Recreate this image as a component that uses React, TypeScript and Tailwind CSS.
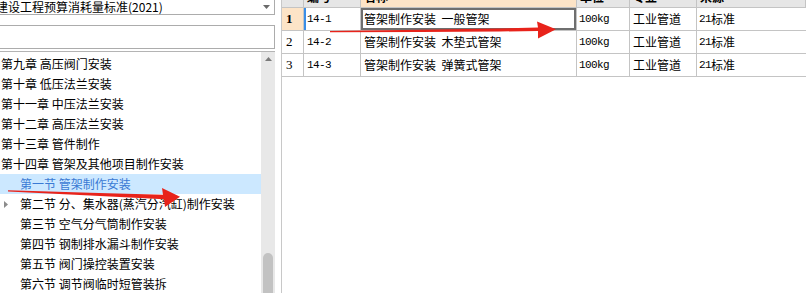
import React from 'react';

type TreeItem = { text: string; level: 0 | 1; selected?: boolean; expandable?: boolean };

const tree: TreeItem[] = [
  { text: '第九章 高压阀门安装', level: 0 },
  { text: '第十章 低压法兰安装', level: 0 },
  { text: '第十一章 中压法兰安装', level: 0 },
  { text: '第十二章 高压法兰安装', level: 0 },
  { text: '第十三章 管件制作', level: 0 },
  { text: '第十四章 管架及其他项目制作安装', level: 0 },
  { text: '第一节 管架制作安装', level: 1, selected: true },
  { text: '第二节 分、集水器(蒸汽分汽缸)制作安装', level: 1, expandable: true },
  { text: '第三节 空气分气筒制作安装', level: 1 },
  { text: '第四节 钢制排水漏斗制作安装', level: 1 },
  { text: '第五节 阀门操控装置安装', level: 1 },
  { text: '第六节 调节阀临时短管装拆', level: 1 },
];

const headers = ['', '编号', '名称', '单位', '专业', '来源'];

const rows = [
  { n: '1', code: '14-1', name: '管架制作安装  一般管架' },
  { n: '2', code: '14-2', name: '管架制作安装  木垫式管架' },
  { n: '3', code: '14-3', name: '管架制作安装  弹簧式管架' },
];

export default function App() {
  return (
    <div className="relative flex h-[293px] w-[806px] overflow-hidden bg-white font-['Noto_Sans_CJK_SC',sans-serif] text-[12px] text-black">
      {/* Left: quota library + chapter tree */}
      <div className="flex w-[282px] shrink-0 flex-col overflow-hidden border-r border-[#c8c8c8]">
        <div className="-mt-[2px] mr-[6px] -ml-[3px] flex h-[17px] shrink-0 items-center border border-[#acacac]">
          <span className="-ml-[2px] whitespace-nowrap leading-none">建设工程预算消耗量标准(2021)</span>
          <svg className="mr-[4px] ml-auto" width="7" height="4" viewBox="0 0 7 4">
            <path d="M0 0h7L3.5 4z" fill="#6a6a6a" />
          </svg>
        </div>
        <div className="mt-[10px] mr-[6px] -ml-[3px] h-[24px] shrink-0 border border-[#acacac]" />
        <div className="mt-[2px] mr-[6px] flex min-h-0 flex-1 border-t border-[#b4b4b4]">
          <div className="flex-1 overflow-hidden pt-[2px]">
            {tree.map((item) => (
              <div
                key={item.text}
                className={`flex h-[20px] items-center whitespace-nowrap ${item.selected ? 'bg-[#cce8ff] text-[#3a7ad4]' : ''}`}
              >
                {item.level === 1 && (
                  <span className="flex w-[20px] shrink-0 items-center pl-[4px]">
                    {item.expandable && (
                      <svg width="4" height="7" viewBox="0 0 4 7">
                        <path d="M0 0l4 3.5L0 7z" fill="#8c8c8c" />
                      </svg>
                    )}
                  </span>
                )}
                <span className={item.level === 0 ? 'pl-[1px]' : ''}>{item.text}</span>
              </div>
            ))}
          </div>
          <div className="flex w-[14px] shrink-0 flex-col items-center bg-[#e8e8e8]">
            <svg className="mt-[5px]" width="7" height="4" viewBox="0 0 7 4">
              <path d="M3.5 0L7 4H0z" fill="#7a7a7a" />
            </svg>
            <div className="mt-auto h-[40px] w-[10px] rounded-t-[5px] bg-[#c2c2c2]" />
          </div>
        </div>
      </div>

      {/* Right: quota table */}
      <div className="min-w-0 flex-1 overflow-hidden">
        <div className="-mt-[16px] grid h-[24px] grid-cols-[22px_57px_216px_53px_67px_1fr]">
          {headers.map((h, i) => (
            <div
              key={i}
              className={`flex items-end overflow-hidden border-r border-b border-[#c4c4c4] pb-[4px] pl-[3px] leading-none font-bold whitespace-nowrap ${i === 2 ? 'bg-[#fde4c7]' : 'bg-[#e6e6e6]'}`}
            >
              {h}
            </div>
          ))}
        </div>
        {rows.map((r, idx) => (
          <div key={r.n} className="grid h-[23px] grid-cols-[22px_57px_216px_53px_67px_1fr]">
            <div
              className={`flex items-center border-r border-b border-[#c4c4c4] pl-[4px] font-['Liberation_Serif',serif] text-[13px] ${idx === 0 ? 'bg-[#fde4c7] font-bold' : ''}`}
            >
              {r.n}
            </div>
            <div
              className={`flex items-center border-r border-b border-[#c4c4c4] pl-[3px] font-['Liberation_Mono',monospace] text-[11px] tracking-[-0.6px] ${idx === 0 ? 'shadow-[inset_2px_0_0_#3a8ee6]' : ''}`}
            >
              {r.code}
            </div>
            <div
              className={`flex items-center overflow-hidden border-r border-b border-[#c4c4c4] pl-[3px] whitespace-pre ${idx === 0 ? 'shadow-[inset_0_0_0_2px_#6f6f6f]' : ''}`}
            >
              {r.name}
            </div>
            <div className="flex items-center border-r border-b border-[#c4c4c4] pl-[2px] font-['Liberation_Mono',monospace] text-[11px] tracking-[-0.6px]">
              100kg
            </div>
            <div className="flex items-center border-r border-b border-[#c4c4c4] pl-[3px]">工业管道</div>
            <div className="flex items-center border-b border-[#c4c4c4] pl-[2px]">
              <span className="font-['Liberation_Mono',monospace] text-[11px] tracking-[-0.6px]">21</span>
              <span>标准</span>
            </div>
          </div>
        ))}
      </div>

      {/* Red annotation arrows drawn over the screenshot */}
      <svg className="pointer-events-none absolute inset-0" width="806" height="293" viewBox="0 0 806 293">
        <polygon
          points="330,31 420,29.8 500,28.5 538,27.4 537,21.5 556,29.3 538,38.5 538,31 500,31.5 420,32 330,32.3"
          fill="#e8231b"
        />
        <polygon
          points="8,190.3 90,192.8 163,194.8 162,188 180,196.8 165,207 164,199.2 90,195.4 8,191.6"
          fill="#e8231b"
        />
      </svg>
    </div>
  );
}
